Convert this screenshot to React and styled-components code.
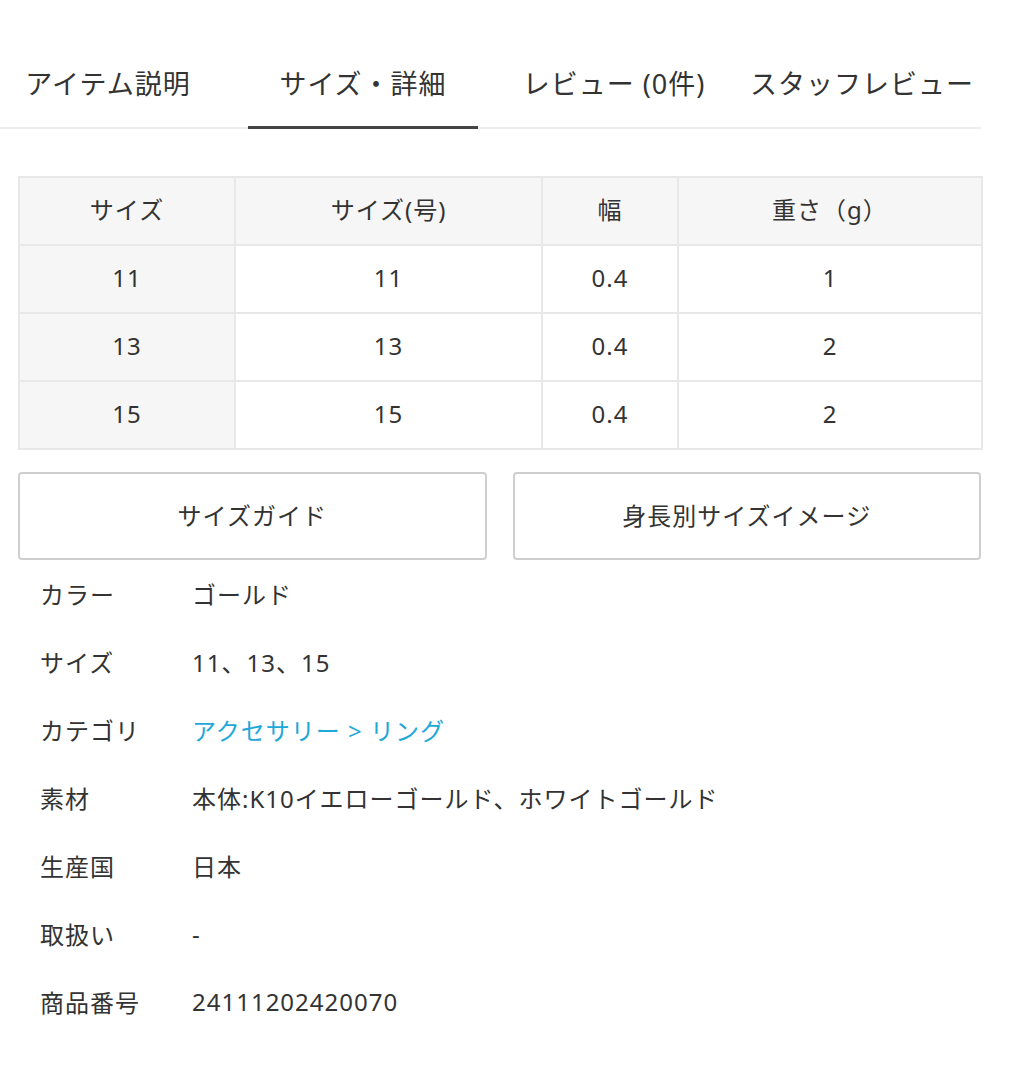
import React from 'react';
import styled, { createGlobalStyle } from 'styled-components';

const GlobalStyle = createGlobalStyle`
  body {
    margin: 0;
    background: #fff;
    color: #333;
    font-family: 'Noto Sans', 'Noto Sans CJK JP', sans-serif;
    letter-spacing: 1px;
  }
`;

const Page = styled.div`
  width: 981px;
  padding-top: 40px;
  padding-bottom: 40px;
`;

const TabBar = styled.nav`
  display: flex;
  border-bottom: 2px solid #ededed;
`;

const Tab = styled.div`
  width: ${(p) => p.$w}px;
  margin-left: ${(p) => p.$ml || 0}px;
  padding: 24px 0 22px;
  margin-bottom: -2px;
  font-size: 27px;
  line-height: 40px;
  text-align: center;
  white-space: nowrap;
  color: #333;
  border-bottom: 3px solid ${(p) => (p.$active ? '#444' : 'transparent')};
`;

const SizeTable = styled.table`
  margin: 47px 0 0 18px;
  width: 963px;
  border-collapse: collapse;
  table-layout: fixed;
  font-size: 24px;
  line-height: 32px;
`;

const Cell = styled.td`
  height: 63px;
  padding: 0 0 3px;
  border: 2px solid #e8e8e8;
  text-align: center;
  vertical-align: middle;
  background: ${(p) => (p.$shade ? '#f6f6f6' : '#fff')};
`;

const Buttons = styled.div`
  margin: 22px 0 0 18px;
  display: grid;
  grid-template-columns: 1fr 1fr;
  gap: 26px;
`;

const Button = styled.button`
  height: 88px;
  padding: 0 0 3px;
  border: 2px solid #cfcfcf;
  border-radius: 4px;
  background: #fff;
  color: #333;
  font-family: inherit;
  letter-spacing: inherit;
  font-size: 24px;
`;

const SpecList = styled.dl`
  margin: 0;
  padding-left: 40px;
  display: grid;
  grid-template-columns: 152px 1fr;
  grid-auto-rows: 68px;
  align-items: center;
  font-size: 24px;
`;

const Label = styled.dt`
  margin: 0 0 2px;
`;

const Value = styled.dd`
  margin: 0 0 2px;
  color: ${(p) => (p.$link ? '#1ea8d8' : '#333')};
`;

const cols = [216, 307, 136, 304];
const head = ['サイズ', 'サイズ(号)', '幅', '重さ（g）'];
const rows = [
  ['11', '11', '0.4', '1'],
  ['13', '13', '0.4', '2'],
  ['15', '15', '0.4', '2'],
];

const specs = [
  ['カラー', 'ゴールド'],
  ['サイズ', '11、13、15'],
  ['カテゴリ', 'アクセサリー > リング', true],
  ['素材', '本体:K10イエローゴールド、ホワイトゴールド'],
  ['生産国', '日本'],
  ['取扱い', '-'],
  ['商品番号', '24111202420070'],
];

export default function App() {
  return (
    <>
      <GlobalStyle />
      <Page>
        <TabBar>
          <Tab $w={216}>アイテム説明</Tab>
          <Tab $w={230} $ml={32} $active>サイズ・詳細</Tab>
          <Tab $w={240} $ml={16}>レビュー (0件)</Tab>
          <Tab $w={236} $ml={10}>スタッフレビュー</Tab>
        </TabBar>

        <SizeTable>
          <colgroup>
            {cols.map((w, i) => (
              <col key={i} style={{ width: w }} />
            ))}
          </colgroup>
          <thead>
            <tr>
              {head.map((h) => (
                <Cell as="th" key={h} $shade style={{ fontWeight: 400 }}>
                  {h}
                </Cell>
              ))}
            </tr>
          </thead>
          <tbody>
            {rows.map((r, i) => (
              <tr key={i}>
                {r.map((v, j) => (
                  <Cell key={j} $shade={j === 0}>
                    {v}
                  </Cell>
                ))}
              </tr>
            ))}
          </tbody>
        </SizeTable>

        <Buttons>
          <Button>サイズガイド</Button>
          <Button>身長別サイズイメージ</Button>
        </Buttons>

        <SpecList>
          {specs.map(([k, v, link]) => (
            <React.Fragment key={k}>
              <Label>{k}</Label>
              <Value $link={link}>{v}</Value>
            </React.Fragment>
          ))}
        </SpecList>
      </Page>
    </>
  );
}
